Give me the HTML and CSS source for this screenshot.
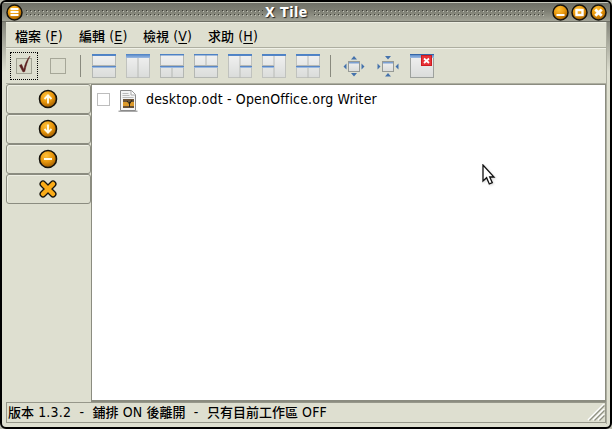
FILE: index.html
```html
<!DOCTYPE html>
<html lang="zh-Hant">
<head>
<meta charset="utf-8">
<title>X Tile</title>
<link rel="stylesheet" href="styles.css">
</head>
<body>
<svg width="0" height="0" class="defs">
  <defs>
    <radialGradient id="amber" cx=".4" cy=".3" r=".75"><stop offset="0" stop-color="#ffc13a"/><stop offset=".5" stop-color="#e8970c"/><stop offset="1" stop-color="#985600"/></radialGradient>
    <linearGradient id="pane" x1="0" y1="0" x2="0" y2="1"><stop offset="0" stop-color="#f1f1f1"/><stop offset="1" stop-color="#dadcda"/></linearGradient>
    <linearGradient id="cap" x1="0" y1="0" x2="0" y2="1"><stop offset="0" stop-color="#4a7fc4"/><stop offset="1" stop-color="#9dbbe2"/></linearGradient>
    <pattern id="dots" width="4" height="4" patternUnits="userSpaceOnUse"><rect width="1" height="1" fill="#3d3e38"/><rect x="1" y="1" width="1" height="1" fill="#c4c5ba"/></pattern>
  </defs>
</svg>
<div class="window">
  <header class="titlebar">
    <svg class="orb" viewBox="0 0 17 17"><circle cx="8.5" cy="8.5" r="7.5" fill="url(#amber)" stroke="#15130d" stroke-width="1.5"/><path d="M4.500 5h8M4.500 8h8M4.500 11h8" stroke="#fff" stroke-width="2.200"/></svg>
    <svg class="grip" width="237" height="6"><rect width="237" height="6" fill="url(#dots)"/></svg>
    <h1>X Tile</h1>
    <svg class="grip grip-right" width="232" height="6"><rect width="232" height="6" fill="url(#dots)"/></svg>
    <div class="controls">
      <svg class="orb" viewBox="0 0 17 17"><circle cx="8.5" cy="8.5" r="7.5" fill="url(#amber)" stroke="#15130d" stroke-width="1.5"/><path d="M4.500 11h8" stroke="#fff" stroke-width="2"/></svg>
      <svg class="orb" viewBox="0 0 17 17"><circle cx="8.5" cy="8.5" r="7.5" fill="url(#amber)" stroke="#15130d" stroke-width="1.5"/><rect x="5.500" y="6" width="6" height="5" fill="none" stroke="#fff" stroke-width="2.400"/></svg>
      <svg class="orb" viewBox="0 0 17 17"><circle cx="8.5" cy="8.5" r="7.5" fill="url(#amber)" stroke="#15130d" stroke-width="1.5"/><path d="M5.300 5.500l6.400 6.200M11.700 5.500l-6.400 6.200" stroke="#fff" stroke-width="2.800"/></svg>
    </div>
  </header>
  <div class="content">
    <nav class="menubar">
      <span class="m1"><b>檔案</b> (<u>F</u>)</span><span class="m2"><b>編輯</b> (<u>E</u>)</span><span class="m3"><b>檢視</b> (<u>V</u>)</span><span class="m4"><b>求助</b> (<u>H</u>)</span>
    </nav>
    <div class="toolbar">
      <div class="focus"><svg viewBox="0 0 24 24" width="24" height="24"><rect x="4.500" y="4.500" width="15" height="15" fill="#d9dac9" stroke="#a0a192"/><path d="M7.500 11.500l2-1.200 2.300 5.200C13 9.500 15 5.500 18 2c-2.500 5-4 9.500-5.200 15.500l-1.800.5z" fill="#5b1f1f" stroke="#5b1f1f" stroke-width=".5"/></svg></div>
      <div class="empty-check"></div>
      <i class="sep sep-a"></i>
      <svg class="tile" viewBox="0 0 24 24"><rect x=".5" y=".5" width="23" height="23" fill="url(#pane)" stroke="#b4b7b3"/><path d="M0 11.500h24" stroke="#b4b7b3"/><path d="M0 0h24v2H0zM0 12h24v2H0z" fill="url(#cap)"/><path d="M0 12.500h24" stroke="#5b87c4"/></svg>
      <svg class="tile" viewBox="0 0 24 24"><rect x=".5" y=".5" width="23" height="23" fill="url(#pane)" stroke="#c0c2be"/><path d="M12 0v24" stroke="#b8bab6"/><path d="M0 0h24v4H0z" fill="url(#cap)"/></svg>
      <svg class="tile" viewBox="0 0 24 24"><rect x=".5" y=".5" width="23" height="23" fill="url(#pane)" stroke="#b4b7b3"/><path d="M0 11.500h24M12 12v12" stroke="#b4b7b3"/><path d="M0 0h24v1.500H0zM0 12h24v2H0z" fill="url(#cap)"/><path d="M0 12.500h24" stroke="#5b87c4"/></svg>
      <svg class="tile" viewBox="0 0 24 24"><rect x=".5" y=".5" width="23" height="23" fill="url(#pane)" stroke="#b4b7b3"/><path d="M0 11.500h24M12 0v12" stroke="#b4b7b3"/><path d="M0 0h24v1.500H0zM0 12h24v2H0z" fill="url(#cap)"/><path d="M0 12.500h24" stroke="#5b87c4"/></svg>
      <svg class="tile" viewBox="0 0 24 24"><rect x=".5" y=".5" width="23" height="23" fill="url(#pane)" stroke="#c0c2be"/><path d="M12 11.500h12M12 0v24" stroke="#b8bab6"/><path d="M0 0h24v2H0zM12 12h12v2H12z" fill="url(#cap)"/><path d="M12 12.500h12" stroke="#5b87c4"/></svg>
      <svg class="tile" viewBox="0 0 24 24"><rect x=".5" y=".5" width="23" height="23" fill="url(#pane)" stroke="#c0c2be"/><path d="M0 11.500h12M12 0v24" stroke="#b8bab6"/><path d="M0 0h24v2H0zM0 12h12v2H0z" fill="url(#cap)"/><path d="M0 12.500h12" stroke="#5b87c4"/></svg>
      <svg class="tile" viewBox="0 0 24 24"><rect x=".5" y=".5" width="23" height="23" fill="url(#pane)" stroke="#c0c2be"/><path d="M0 11.500h24M12 0v24" stroke="#b8bab6"/><path d="M0 0h24v2H0zM0 12h24v2H0z" fill="url(#cap)"/><path d="M0 12.500h24" stroke="#5b87c4"/></svg>
      <i class="sep sep-b"></i>
      <svg class="tile" viewBox="0 0 24 24"><rect x="6.500" y="7.500" width="11" height="10" fill="url(#pane)" stroke="#969a96"/><path d="M7 8h10v1.500H7z" fill="#7ba0d2"/><path d="M9 5.500h6L12 2zM9 19h6l-3 3.500zM4.500 9.500v6L1.500 12.500zM19.500 9.500v6l3-3z" fill="#4472ac"/></svg>
      <svg class="tile" viewBox="0 0 24 24"><rect x="6.500" y="7.500" width="11" height="10" fill="url(#pane)" stroke="#969a96"/><path d="M7 8h10v1.500H7z" fill="#7ba0d2"/><path d="M9 2h6l-3 3.500zM9 22.500h6L12 19zM1.500 9.500v6l3-3zM22.500 9.500v6l-3-3z" fill="#4472ac"/></svg>
      <svg class="tile" viewBox="0 0 24 24"><rect x=".5" y=".5" width="23" height="23" fill="url(#pane)" stroke="#9da19d"/><path d="M0 0h24v4H0z" fill="url(#cap)"/><path d="M0 .5h24" stroke="#3566a7"/><rect x="11.500" y="1.500" width="10" height="10" fill="#e83238" stroke="#cc1b20"/><path d="M14 4.500l5 4.500M19 4.500L14 9" stroke="#fff" stroke-width="1.800"/></svg>
    </div>
    <main class="body">
      <div class="side">
        <button><svg viewBox="0 0 20 20"><circle cx="10" cy="10" r="8.500" fill="url(#amber)" stroke="#15130d" stroke-width="1.600"/><path d="M10 14.500V6.500M6.500 10L10 6.300 13.500 10" fill="none" stroke="#fffbe8" stroke-width="1.900"/></svg></button>
        <button><svg viewBox="0 0 20 20"><circle cx="10" cy="10" r="8.500" fill="url(#amber)" stroke="#15130d" stroke-width="1.600"/><path d="M10 5.500v8M6.500 10l3.500 3.700L13.500 10" fill="none" stroke="#fffbe8" stroke-width="1.900"/></svg></button>
        <button><svg viewBox="0 0 20 20"><circle cx="10" cy="10" r="8.500" fill="url(#amber)" stroke="#15130d" stroke-width="1.600"/><path d="M6 10h8" stroke="#fffbe8" stroke-width="2"/></svg></button>
        <button><svg viewBox="0 0 20 20"><path d="M5 5l10 10M15 5L5 15" stroke="#15130d" stroke-width="7" stroke-linecap="round"/><path d="M5 5l10 10M15 5L5 15" stroke="#fbac18" stroke-width="4.500" stroke-linecap="round"/></svg></button>
      </div>
      <div class="list">
        <div class="row">
          <span class="check"></span>
          <svg class="doc" width="20" height="24" viewBox="0 0 20 24"><path d="M.5 21.500h19v1.500H.5z" fill="#aaa"/><path d="M2.500 1.500h11l4 4v16h-15z" fill="#f4f4f4" stroke="#8b8b8b"/><path d="M13 1.500v4.500h4.500" fill="#fff" stroke="#aaa"/><path d="M4.500 4.500h6M4.500 6.500h7M4.500 8.500h11" stroke="#bbb"/><path d="M5 10h11v9H5z" fill="#6a5237"/><path d="M5 13h11v4H5z" fill="#dc9a2b"/><path d="M11.500 18v-5M9 12l2.500 3 2.500-4" fill="none" stroke="#282317"/></svg>
          <span class="label">desktop.odt - OpenOffice.org Writer</span>
        </div>
      </div>
    </main>
    <footer class="status"><span class="stext"><b>版本</b> 1.3.2&nbsp; -&nbsp; <b>鋪排</b> ON <b>後離開</b>&nbsp; -&nbsp; <b>只有目前工作區</b> OFF</span>
      <svg class="resize" viewBox="0 0 18 18"><path d="M1 17L17 1M6 17L17 6M11 17l6-6" stroke="#fff" stroke-width="1.500"/><path d="M2.500 17.500l15-15M7.500 17.500l10-10M12.500 17.500l5-5" stroke="#8f9083" stroke-width="1.200"/></svg>
    </footer>
  </div>
</div>
<svg class="pointer" width="14" height="22" viewBox="0 0 14 22"><path d="M1 1v16l3.600-3.300L7.300 20l3-1.300L7.700 13H12z" fill="#fff" stroke="#111" stroke-width="1.300"/></svg>
</body>
</html>
```
FILE: styles.css
```css
* { box-sizing: border-box; }
body { margin: 0; width: 612px; height: 429px; overflow: hidden; background: #b9baae; color: #000; font: 14px/18px "DejaVu Sans Condensed", "DejaVu Sans", "Noto Sans CJK TC", sans-serif; font-stretch: condensed; letter-spacing: .17px; }
svg { display: block; flex: none; }
b { font-size: 13px; font-weight: 500; letter-spacing: 0; line-height: 1; }
.defs { position: absolute; }
.window { width: 612px; height: 429px; border: 2px solid #000; border-radius: 6px; background: linear-gradient(#85867b 20px, #dedfd0 70px); overflow: hidden; }
.titlebar { height: 20px; display: flex; align-items: center; padding: 0 0 0 4px; border-top: 1px solid #c6c7bb; border-bottom: 1px solid #6e6f65; background: linear-gradient(#6f7067, #7e7f74 45%, #a2a396); }
.orb { width: 17px; height: 17px; }
.grip { margin: 1px 0 0 3px; }
.grip-right { margin-left: 5px; }
h1 { margin: 0; width: 46px; padding-left: 2px; color: #fff; font-size: 14px; letter-spacing: .5px; line-height: 18px; font-weight: bold; white-space: nowrap; text-shadow: 1px 1px 1px #222; }
.controls { display: flex; gap: 2px; margin-left: 6px; }
.content { width: 601px; height: 402px; margin-left: 4px; background: #dedfd0; border-right: 1px solid #adaea0; }
.menubar { height: 26px; display: flex; padding-top: 4px; border-top: 1px solid #edeee2; border-bottom: 1px solid #adaea0; white-space: nowrap; }
.menubar span { width: 64px; }
.menubar .m1 { margin-left: 9px; }
.menubar .m3 { width: 65px; }
.menubar u { text-underline-offset: 2px; }
.toolbar { height: 36px; display: flex; align-items: center; padding-left: 4px; border-top: 1px solid #f0f1e7; border-bottom: 1px solid #adaea0; }
.focus { width: 28px; height: 28px; padding: 1px; border: 1px dotted #000; }
.empty-check { width: 16px; height: 16px; margin-left: 12px; border: 1px solid #a6a798; }
.sep { width: 1px; height: 22px; background: #898a7e; }
.sep-a { margin: 0 11px 0 14px; }
.sep-b { margin-right: 11px; }
.tile { width: 24px; height: 24px; margin-right: 10px; }
.body { height: 318px; display: flex; }
.side { width: 85px; }
.side button { display: grid; place-items: center; width: 85px; height: 30px; padding: 0; border: 1px solid #8b8c80; border-radius: 3px; background: #dedfd0; box-shadow: inset 1px 1px #eff0e5; }
.side svg { width: 20px; height: 20px; margin-left: -1px; }
.list { flex: 1; border: 1px solid #8b8c80; border-width: 1px 1px 2px; background: #fff; }
.row { display: flex; height: 28px; align-items: center; padding-left: 5px; }
.check { width: 13px; height: 13px; border: 1px solid #bdbdbd; }
.doc { margin-left: 8px; margin-top: 3px; }
.label { margin-left: 8px; white-space: nowrap; }
.status { height: 21px; display: flex; justify-content: space-between; padding-left: 1px; border: 1px solid #96978a; white-space: nowrap; }
.resize { width: 18px; height: 18px; }
.pointer { position: absolute; left: 482px; top: 164px; filter: drop-shadow(1px 1px 1px #9996); }
```
